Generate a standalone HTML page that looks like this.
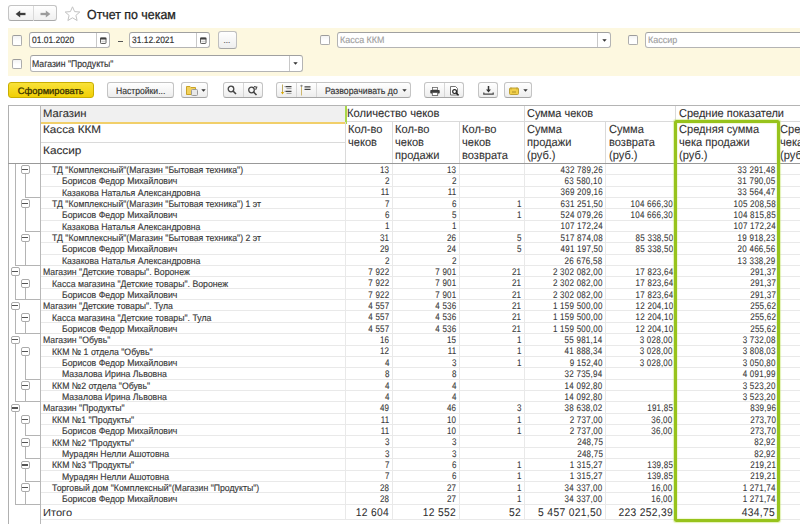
<!DOCTYPE html>
<html><head><meta charset="utf-8"><style>
html,body{margin:0;padding:0;width:800px;height:524px;overflow:hidden;background:#fff;}
body{position:relative;font-family:"Liberation Sans", sans-serif;}
.t{position:absolute;white-space:nowrap;text-rendering:geometricPrecision;-webkit-text-stroke:0.15px currentColor;}
.b{position:absolute;}
</style></head><body>
<div class="b" style="left:8.20px;top:5.20px;width:49.00px;height:16.30px;border:1px solid #c4c4c4;border-bottom-color:#a9a9a9;border-radius:3px;background:linear-gradient(#ffffff,#f0f0f0);box-sizing:border-box;"></div>
<div class="b" style="left:33.00px;top:6.00px;width:1.00px;height:15.00px;background:#dadada;"></div>
<svg class="b" style="left:15px;top:10px" width="11" height="8" viewBox="0 0 11 8"><path d="M4 4 H10.5" stroke="#3c3c3c" stroke-width="2.3"/><path d="M0.6 4 L5.2 0.4 V7.6 Z" fill="#3c3c3c"/></svg>
<svg class="b" style="left:39.5px;top:10px" width="11" height="8" viewBox="0 0 11 8"><path d="M0.5 4 H7" stroke="#9c9c9c" stroke-width="2.3"/><path d="M10.4 4 L5.8 0.4 V7.6 Z" fill="#9c9c9c"/></svg>
<svg class="b" style="left:64px;top:6px" width="17" height="16" viewBox="0 0 17 16"><path d="M8.5 0.8 L10.6 5.6 L15.8 6 L11.9 9.4 L13.1 14.5 L8.5 11.8 L3.9 14.5 L5.1 9.4 L1.2 6 L6.4 5.6 Z" fill="#fff" stroke="#c2c2c2" stroke-width="1"/></svg>
<div class="t" style="left:87.20px;top:7.87px;font-size:13.14px;line-height:13.14px;color:#222;transform:scaleX(0.9434);transform-origin:left top;-webkit-text-stroke:0.3px #222;">Отчет по чекам</div>
<div class="b" style="left:8.00px;top:28.00px;width:792.00px;height:47.50px;background:#fdf8e0;"></div>
<div class="b" style="left:12.00px;top:34.80px;width:10.00px;height:10.80px;border:1px solid #adadad;border-top-color:#9c9c9c;border-radius:2px;background:linear-gradient(#f3f3f3,#ffffff 60%);box-sizing:border-box;"></div>
<div class="b" style="left:29.30px;top:32.20px;width:81.20px;height:16.20px;border:1px solid #b4b4b4;border-top-color:#a0a0a0;border-radius:3px;background:#fff;box-sizing:border-box;"></div>
<div class="b" style="left:96.20px;top:33.20px;width:1.00px;height:14.20px;background:#c8c8c8;"></div>
<div class="t" style="left:32.30px;top:36.43px;font-size:9.29px;line-height:9.29px;color:#333;transform:scaleX(0.9091);transform-origin:left top;">01.01.2020</div>
<svg class="b" style="left:100.00px;top:37.00px" width="7" height="7" viewBox="0 0 7 7"><rect x="0.5" y="1" width="5.5" height="5.5" rx="0.8" fill="#f4f4f4" stroke="#505050" stroke-width="0.9"/><rect x="0.2" y="0.6" width="6.1" height="1.9" fill="#404040"/><path d="M1.5 4.5 H5" stroke="#bbb" stroke-width="0.6"/></svg>
<div class="b" style="left:118.00px;top:40.60px;width:4.50px;height:1.20px;background:#555;"></div>
<div class="b" style="left:129.00px;top:32.20px;width:81.20px;height:16.20px;border:1px solid #b4b4b4;border-top-color:#a0a0a0;border-radius:3px;background:#fff;box-sizing:border-box;"></div>
<div class="b" style="left:196.00px;top:33.20px;width:1.00px;height:14.20px;background:#c8c8c8;"></div>
<div class="t" style="left:132.00px;top:36.43px;font-size:9.29px;line-height:9.29px;color:#333;transform:scaleX(0.9091);transform-origin:left top;">31.12.2021</div>
<svg class="b" style="left:200.00px;top:37.00px" width="7" height="7" viewBox="0 0 7 7"><rect x="0.5" y="1" width="5.5" height="5.5" rx="0.8" fill="#f4f4f4" stroke="#505050" stroke-width="0.9"/><rect x="0.2" y="0.6" width="6.1" height="1.9" fill="#404040"/><path d="M1.5 4.5 H5" stroke="#bbb" stroke-width="0.6"/></svg>
<div class="b" style="left:217.60px;top:31.20px;width:19.60px;height:17.40px;border:1px solid #bfbfbf;border-bottom-color:#a5a5a5;border-radius:3px;background:linear-gradient(#fff,#eee);box-sizing:border-box;"></div>
<div class="t" style="left:223.50px;top:37.23px;font-size:8.00px;line-height:8.00px;color:#555;">...</div>
<div class="b" style="left:320.10px;top:34.60px;width:10.00px;height:10.80px;border:1px solid #adadad;border-top-color:#9c9c9c;border-radius:2px;background:linear-gradient(#f3f3f3,#ffffff 60%);box-sizing:border-box;"></div>
<div class="b" style="left:337.30px;top:32.20px;width:274.10px;height:16.20px;border:1px solid #b4b4b4;border-top-color:#a0a0a0;border-radius:3px;background:#fff;box-sizing:border-box;"></div>
<div class="b" style="left:597.00px;top:33.20px;width:1.00px;height:14.20px;background:#c8c8c8;"></div>
<div class="t" style="left:340.30px;top:36.37px;font-size:9.49px;line-height:9.49px;color:#a0a0a0;transform:scaleX(0.9434);transform-origin:left top;">Касса ККМ</div>
<svg class="b" style="left:601.50px;top:39.00px" width="5" height="3" viewBox="0 0 5 3"><path d="M0.3 0.3 H4.7 L2.5 2.8 Z" fill="#333"/></svg>
<div class="b" style="left:628.20px;top:34.70px;width:10.00px;height:10.80px;border:1px solid #adadad;border-top-color:#9c9c9c;border-radius:2px;background:linear-gradient(#f3f3f3,#ffffff 60%);box-sizing:border-box;"></div>
<div class="b" style="left:645.20px;top:32.20px;width:200.00px;height:16.20px;border:1px solid #b4b4b4;border-top-color:#a0a0a0;border-radius:3px;background:#fff;box-sizing:border-box;"></div>
<div class="t" style="left:648.30px;top:36.37px;font-size:9.49px;line-height:9.49px;color:#a0a0a0;transform:scaleX(0.9434);transform-origin:left top;">Кассир</div>
<div class="b" style="left:12.00px;top:58.60px;width:10.00px;height:10.80px;border:1px solid #adadad;border-top-color:#9c9c9c;border-radius:2px;background:linear-gradient(#f3f3f3,#ffffff 60%);box-sizing:border-box;"></div>
<div class="b" style="left:29.50px;top:55.30px;width:273.80px;height:16.80px;border:1px solid #b4b4b4;border-top-color:#a0a0a0;border-radius:3px;background:#fff;box-sizing:border-box;"></div>
<div class="b" style="left:289.10px;top:56.30px;width:1.00px;height:14.80px;background:#c8c8c8;"></div>
<div class="t" style="left:32.10px;top:59.75px;font-size:9.74px;line-height:9.74px;color:#333;transform:scaleX(0.8929);transform-origin:left top;">Магазин "Продукты"</div>
<svg class="b" style="left:293.30px;top:62.10px" width="5" height="3" viewBox="0 0 5 3"><path d="M0.3 0.3 H4.7 L2.5 2.8 Z" fill="#333"/></svg>
<div class="b" style="left:8.25px;top:81.80px;width:85.50px;height:16.60px;border:1px solid #c9ae00;border-radius:3px;background:linear-gradient(#f9e23a,#f1cf05);box-sizing:border-box;"></div>
<div class="t" style="left:17.80px;top:87.09px;font-size:9.35px;line-height:9.35px;color:#3a3300;-webkit-text-stroke:0.3px #3a3300;">Сформировать</div>
<div class="b" style="left:107.40px;top:81.80px;width:67.00px;height:16.60px;border:1px solid #c4c4c4;border-bottom-color:#a6a6a6;border-radius:3px;background:linear-gradient(#ffffff,#ededed);box-sizing:border-box;"></div>
<div class="t" style="left:116.30px;top:87.19px;font-size:9.46px;line-height:9.46px;color:#333;transform:scaleX(0.9091);transform-origin:left top;">Настройки...</div>
<div class="b" style="left:181.40px;top:81.80px;width:27.00px;height:16.60px;border:1px solid #c4c4c4;border-bottom-color:#a6a6a6;border-radius:3px;background:linear-gradient(#ffffff,#ededed);box-sizing:border-box;"></div>
<svg class="b" style="left:186px;top:84px" width="13" height="12" viewBox="0 0 13 12"><path d="M0.5 2.5 H4 L5 3.5 H9.5 V10.5 H0.5 Z" fill="#f2d15a" stroke="#c9a227" stroke-width="1"/><rect x="5.5" y="5.5" width="6" height="6" rx="1" fill="#e8e8e8" stroke="#9a9a9a"/></svg>
<svg class="b" style="left:200.50px;top:88.80px" width="5" height="3" viewBox="0 0 5 3"><path d="M0.3 0.3 H4.7 L2.5 2.8 Z" fill="#333"/></svg>
<div class="b" style="left:222.60px;top:81.80px;width:40.00px;height:16.60px;border:1px solid #c4c4c4;border-bottom-color:#a6a6a6;border-radius:3px;background:linear-gradient(#ffffff,#ededed);box-sizing:border-box;"></div>
<div class="b" style="left:242.50px;top:82.80px;width:1.00px;height:14.60px;background:#d6d6d6;"></div>
<svg class="b" style="left:227px;top:85px" width="10" height="10" viewBox="0 0 10 10"><circle cx="4" cy="4" r="2.8" fill="none" stroke="#444" stroke-width="1.3"/><path d="M6 6 L9 9" stroke="#444" stroke-width="1.6"/></svg>
<svg class="b" style="left:247px;top:84.5px" width="11" height="11" viewBox="0 0 11 11"><circle cx="4.5" cy="5" r="2.8" fill="none" stroke="#444" stroke-width="1.3"/><path d="M6.5 7 L9.5 10" stroke="#444" stroke-width="1.6"/><path d="M7 1.5 L9.8 2.2 L8.6 4.8" fill="none" stroke="#444" stroke-width="1.1"/></svg>
<div class="b" style="left:276.40px;top:81.80px;width:134.20px;height:16.60px;border:1px solid #c4c4c4;border-bottom-color:#a6a6a6;border-radius:3px;background:linear-gradient(#ffffff,#ededed);box-sizing:border-box;"></div>
<div class="b" style="left:296.20px;top:82.80px;width:1.00px;height:14.60px;background:#d6d6d6;"></div>
<div class="b" style="left:316.40px;top:82.80px;width:1.00px;height:14.60px;background:#d6d6d6;"></div>
<svg class="b" style="left:280px;top:84px" width="13" height="12" viewBox="0 0 13 12"><path d="M2.5 0.5 V9.5" stroke="#b8a050" stroke-width="0.9"/><path d="M0.9 8 L2.5 10.6 L4.1 8 Z" fill="#d8a800"/><path d="M5.5 2.6 H11.5 M5.5 7.3 H11.5" stroke="#444" stroke-width="1.2"/><path d="M6.5 4.6 H11.5 M6.5 9.4 H11.5" stroke="#999" stroke-width="0.9"/><path d="M4.6 2.6 H5.2 M4.6 7.3 H5.2" stroke="#777" stroke-width="1"/></svg>
<svg class="b" style="left:300px;top:84px" width="13" height="12" viewBox="0 0 13 12"><path d="M1.5 1.5 V11.5" stroke="#c8b060" stroke-width="0.9"/><circle cx="1.5" cy="1.8" r="1.1" fill="#888"/><path d="M4.5 2.8 H10.5 M4.5 5.4 H10.5" stroke="#444" stroke-width="1.2"/></svg>
<div class="t" style="left:324.60px;top:87.05px;font-size:9.62px;line-height:9.62px;color:#333;transform:scaleX(0.9091);transform-origin:left top;">Разворачивать до</div>
<svg class="b" style="left:402.10px;top:88.80px" width="5" height="3" viewBox="0 0 5 3"><path d="M0.3 0.3 H4.7 L2.5 2.8 Z" fill="#333"/></svg>
<div class="b" style="left:424.40px;top:81.80px;width:39.60px;height:16.60px;border:1px solid #c4c4c4;border-bottom-color:#a6a6a6;border-radius:3px;background:linear-gradient(#ffffff,#ededed);box-sizing:border-box;"></div>
<div class="b" style="left:444.20px;top:82.80px;width:1.00px;height:14.60px;background:#d6d6d6;"></div>
<svg class="b" style="left:429.5px;top:86.5px" width="10" height="9" viewBox="0 0 10 9"><rect x="2.5" y="0.5" width="5" height="2.5" fill="#fff" stroke="#666" stroke-width="0.8"/><rect x="0.3" y="3" width="9.4" height="3.6" rx="0.8" fill="#3c3c3c"/><rect x="2.3" y="5.5" width="5.4" height="3" fill="#fff" stroke="#555" stroke-width="0.8"/></svg>
<svg class="b" style="left:449.5px;top:86px" width="10" height="10" viewBox="0 0 10 10"><path d="M0.5 0.5 H5.5 L7.5 2.5 V9 H0.5 Z" fill="#fff" stroke="#666" stroke-width="0.9"/><circle cx="4.6" cy="5.6" r="1.9" fill="none" stroke="#222" stroke-width="1.2"/><path d="M6 7 L8.6 9.4" stroke="#222" stroke-width="1.5"/></svg>
<div class="b" style="left:478.40px;top:81.80px;width:19.60px;height:16.60px;border:1px solid #c4c4c4;border-bottom-color:#a6a6a6;border-radius:3px;background:linear-gradient(#ffffff,#ededed);box-sizing:border-box;"></div>
<svg class="b" style="left:482.5px;top:86px" width="11" height="9" viewBox="0 0 11 9"><path d="M5.5 0 V4.5" stroke="#333" stroke-width="1.5"/><path d="M3 3.6 L5.5 6.4 L8 3.6 Z" fill="#333"/><path d="M0.8 6.5 V8.2 H10.2 V6.5" fill="none" stroke="#444" stroke-width="1.2"/></svg>
<div class="b" style="left:504.40px;top:81.80px;width:27.20px;height:16.60px;border:1px solid #c4c4c4;border-bottom-color:#a6a6a6;border-radius:3px;background:linear-gradient(#ffffff,#ededed);box-sizing:border-box;"></div>
<svg class="b" style="left:509.2px;top:86.8px" width="10" height="8" viewBox="0 0 10 8"><rect x="0.5" y="1" width="9" height="6.5" rx="1" fill="#f1cf4a" stroke="#b89a2a" stroke-width="0.9"/><path d="M2 0.5 V2.5 M8 0.5 V2.5" stroke="#b89a2a" stroke-width="0.9"/><path d="M3 5 H7" stroke="#a08020" stroke-width="0.8"/></svg>
<svg class="b" style="left:523.30px;top:88.80px" width="5" height="3" viewBox="0 0 5 3"><path d="M0.3 0.3 H4.7 L2.5 2.8 Z" fill="#333"/></svg>
<div class="b" style="left:8.40px;top:105.20px;width:800.00px;height:1.00px;background:#b4b4b4;"></div>
<div class="b" style="left:8.40px;top:105.20px;width:1.00px;height:420.00px;background:#b0b0b0;"></div>
<div class="b" style="left:40.20px;top:105.20px;width:1.00px;height:420.00px;background:#b8b8b8;"></div>
<div class="b" style="left:41.20px;top:106.20px;width:304.10px;height:15.60px;background:#f0f0f0;"></div>
<div class="b" style="left:41.20px;top:121.80px;width:305.50px;height:2.00px;background:#f1cf6a;"></div>
<div class="b" style="left:345.30px;top:106.20px;width:1.60px;height:17.40px;background:#a8d84a;"></div>
<div class="b" style="left:346.90px;top:121.30px;width:460.00px;height:1.00px;background:#dadada;"></div>
<div class="b" style="left:41.20px;top:142.00px;width:304.10px;height:1.00px;background:#dadada;"></div>
<div class="b" style="left:8.40px;top:162.80px;width:800.00px;height:1.00px;background:#999999;"></div>
<div class="b" style="left:523.50px;top:106.20px;width:1.00px;height:15.10px;background:#dadada;"></div>
<div class="b" style="left:675.30px;top:106.20px;width:1.00px;height:15.10px;background:#dadada;"></div>
<div class="b" style="left:345.30px;top:122.30px;width:1.00px;height:40.50px;background:#dadada;"></div>
<div class="b" style="left:391.50px;top:122.30px;width:1.00px;height:40.50px;background:#dadada;"></div>
<div class="b" style="left:458.50px;top:122.30px;width:1.00px;height:40.50px;background:#dadada;"></div>
<div class="b" style="left:523.50px;top:122.30px;width:1.00px;height:40.50px;background:#dadada;"></div>
<div class="b" style="left:605.00px;top:122.30px;width:1.00px;height:40.50px;background:#dadada;"></div>
<div class="b" style="left:675.30px;top:122.30px;width:1.00px;height:40.50px;background:#dadada;"></div>
<div class="b" style="left:778.00px;top:122.30px;width:1.00px;height:40.50px;background:#dadada;"></div>
<div class="t" style="left:43.20px;top:109.32px;font-size:10.96px;line-height:10.96px;color:#2f2f2f;transform:scaleX(1.0309);transform-origin:left top;-webkit-text-stroke:0.1px #333;">Магазин</div>
<div class="t" style="left:43.20px;top:124.99px;font-size:10.76px;line-height:10.76px;color:#2f2f2f;transform:scaleX(1.0870);transform-origin:left top;-webkit-text-stroke:0.1px #333;">Касса ККМ</div>
<div class="t" style="left:43.20px;top:146.01px;font-size:10.86px;line-height:10.86px;color:#2f2f2f;transform:scaleX(1.0870);transform-origin:left top;-webkit-text-stroke:0.1px #333;">Кассир</div>
<div class="t" style="left:347.30px;top:108.45px;font-size:11.76px;line-height:11.76px;color:#2f2f2f;transform:scaleX(0.9524);transform-origin:left top;-webkit-text-stroke:0.1px #333;">Количество чеков</div>
<div class="t" style="left:527.00px;top:108.67px;font-size:11.50px;line-height:11.50px;color:#2f2f2f;transform:scaleX(0.9524);transform-origin:left top;-webkit-text-stroke:0.1px #333;">Сумма чеков</div>
<div class="t" style="left:678.50px;top:108.62px;font-size:11.55px;line-height:11.55px;color:#2f2f2f;transform:scaleX(0.9524);transform-origin:left top;-webkit-text-stroke:0.1px #333;">Средние показатели</div>
<div class="t" style="left:347.80px;top:124.33px;font-size:11.65px;line-height:11.65px;color:#333;transform:scaleX(0.9524);transform-origin:left top;-webkit-text-stroke:0.1px #333;">Кол-во</div>
<div class="t" style="left:347.80px;top:137.18px;font-size:11.65px;line-height:11.65px;color:#333;transform:scaleX(0.9524);transform-origin:left top;-webkit-text-stroke:0.1px #333;">чеков</div>
<div class="t" style="left:394.50px;top:124.33px;font-size:11.65px;line-height:11.65px;color:#333;transform:scaleX(0.9524);transform-origin:left top;-webkit-text-stroke:0.1px #333;">Кол-во</div>
<div class="t" style="left:394.50px;top:137.18px;font-size:11.65px;line-height:11.65px;color:#333;transform:scaleX(0.9524);transform-origin:left top;-webkit-text-stroke:0.1px #333;">чеков</div>
<div class="t" style="left:394.50px;top:150.03px;font-size:11.65px;line-height:11.65px;color:#333;transform:scaleX(0.9524);transform-origin:left top;-webkit-text-stroke:0.1px #333;">продажи</div>
<div class="t" style="left:461.60px;top:124.33px;font-size:11.65px;line-height:11.65px;color:#333;transform:scaleX(0.9524);transform-origin:left top;-webkit-text-stroke:0.1px #333;">Кол-во</div>
<div class="t" style="left:461.60px;top:137.18px;font-size:11.65px;line-height:11.65px;color:#333;transform:scaleX(0.9524);transform-origin:left top;-webkit-text-stroke:0.1px #333;">чеков</div>
<div class="t" style="left:461.60px;top:150.03px;font-size:11.65px;line-height:11.65px;color:#333;transform:scaleX(0.9524);transform-origin:left top;-webkit-text-stroke:0.1px #333;">возврата</div>
<div class="t" style="left:527.00px;top:124.33px;font-size:11.65px;line-height:11.65px;color:#333;transform:scaleX(0.9524);transform-origin:left top;-webkit-text-stroke:0.1px #333;">Сумма</div>
<div class="t" style="left:527.00px;top:137.18px;font-size:11.65px;line-height:11.65px;color:#333;transform:scaleX(0.9524);transform-origin:left top;-webkit-text-stroke:0.1px #333;">продажи</div>
<div class="t" style="left:527.00px;top:150.03px;font-size:11.65px;line-height:11.65px;color:#333;transform:scaleX(0.9524);transform-origin:left top;-webkit-text-stroke:0.1px #333;">(руб.)</div>
<div class="t" style="left:608.60px;top:124.33px;font-size:11.65px;line-height:11.65px;color:#333;transform:scaleX(0.9524);transform-origin:left top;-webkit-text-stroke:0.1px #333;">Сумма</div>
<div class="t" style="left:608.60px;top:137.18px;font-size:11.65px;line-height:11.65px;color:#333;transform:scaleX(0.9524);transform-origin:left top;-webkit-text-stroke:0.1px #333;">возврата</div>
<div class="t" style="left:608.60px;top:150.03px;font-size:11.65px;line-height:11.65px;color:#333;transform:scaleX(0.9524);transform-origin:left top;-webkit-text-stroke:0.1px #333;">(руб.)</div>
<div class="t" style="left:678.50px;top:124.33px;font-size:11.65px;line-height:11.65px;color:#333;transform:scaleX(0.9524);transform-origin:left top;-webkit-text-stroke:0.1px #333;">Средняя сумма</div>
<div class="t" style="left:678.50px;top:137.18px;font-size:11.65px;line-height:11.65px;color:#333;transform:scaleX(0.9524);transform-origin:left top;-webkit-text-stroke:0.1px #333;">чека продажи</div>
<div class="t" style="left:678.50px;top:150.03px;font-size:11.65px;line-height:11.65px;color:#333;transform:scaleX(0.9524);transform-origin:left top;-webkit-text-stroke:0.1px #333;">(руб.)</div>
<div class="t" style="left:779.80px;top:124.33px;font-size:11.65px;line-height:11.65px;color:#333;transform:scaleX(0.9524);transform-origin:left top;-webkit-text-stroke:0.1px #333;">Средняя</div>
<div class="t" style="left:779.80px;top:137.18px;font-size:11.65px;line-height:11.65px;color:#333;transform:scaleX(0.9524);transform-origin:left top;-webkit-text-stroke:0.1px #333;">чека</div>
<div class="t" style="left:779.80px;top:150.03px;font-size:11.65px;line-height:11.65px;color:#333;transform:scaleX(0.9524);transform-origin:left top;-webkit-text-stroke:0.1px #333;">(руб.)</div>
<div class="b" style="left:41.20px;top:174.16px;width:800.00px;height:1.00px;background:#e9e9e9;"></div>
<div class="t" style="left:52.20px;top:165.90px;font-size:9.33px;line-height:9.33px;color:#3a3a3a;transform:scaleX(0.9346);transform-origin:left top;">ТД "Комплексный"(Магазин "Бытовая техника")</div>
<div class="t" style="right:410.85px;top:165.67px;font-size:9.60px;line-height:9.60px;color:#3a3a3a;text-align:right;transform:scaleX(0.8333);transform-origin:right top;letter-spacing:0.3px;-webkit-text-stroke:0.1px #3a3a3a;">13</div>
<div class="t" style="right:343.85px;top:165.67px;font-size:9.60px;line-height:9.60px;color:#3a3a3a;text-align:right;transform:scaleX(0.8333);transform-origin:right top;letter-spacing:0.3px;-webkit-text-stroke:0.1px #3a3a3a;">13</div>
<div class="t" style="right:197.35px;top:165.67px;font-size:9.60px;line-height:9.60px;color:#3a3a3a;text-align:right;transform:scaleX(0.8333);transform-origin:right top;letter-spacing:0.3px;-webkit-text-stroke:0.1px #3a3a3a;">432 789,26</div>
<div class="t" style="right:24.35px;top:165.67px;font-size:9.60px;line-height:9.60px;color:#3a3a3a;text-align:right;transform:scaleX(0.8333);transform-origin:right top;letter-spacing:0.3px;-webkit-text-stroke:0.1px #3a3a3a;">33 291,48</div>
<div class="b" style="left:41.20px;top:185.52px;width:800.00px;height:1.00px;background:#e9e9e9;"></div>
<div class="t" style="left:61.60px;top:177.26px;font-size:9.33px;line-height:9.33px;color:#3a3a3a;transform:scaleX(0.9346);transform-origin:left top;">Борисов Федор Михайлович</div>
<div class="t" style="right:410.85px;top:177.03px;font-size:9.60px;line-height:9.60px;color:#3a3a3a;text-align:right;transform:scaleX(0.8333);transform-origin:right top;letter-spacing:0.3px;-webkit-text-stroke:0.1px #3a3a3a;">2</div>
<div class="t" style="right:343.85px;top:177.03px;font-size:9.60px;line-height:9.60px;color:#3a3a3a;text-align:right;transform:scaleX(0.8333);transform-origin:right top;letter-spacing:0.3px;-webkit-text-stroke:0.1px #3a3a3a;">2</div>
<div class="t" style="right:197.35px;top:177.03px;font-size:9.60px;line-height:9.60px;color:#3a3a3a;text-align:right;transform:scaleX(0.8333);transform-origin:right top;letter-spacing:0.3px;-webkit-text-stroke:0.1px #3a3a3a;">63 580,10</div>
<div class="t" style="right:24.35px;top:177.03px;font-size:9.60px;line-height:9.60px;color:#3a3a3a;text-align:right;transform:scaleX(0.8333);transform-origin:right top;letter-spacing:0.3px;-webkit-text-stroke:0.1px #3a3a3a;">31 790,05</div>
<div class="b" style="left:41.20px;top:196.88px;width:800.00px;height:1.00px;background:#e9e9e9;"></div>
<div class="t" style="left:61.60px;top:188.62px;font-size:9.33px;line-height:9.33px;color:#3a3a3a;transform:scaleX(0.9346);transform-origin:left top;">Казакова Наталья Александровна</div>
<div class="t" style="right:410.85px;top:188.39px;font-size:9.60px;line-height:9.60px;color:#3a3a3a;text-align:right;transform:scaleX(0.8333);transform-origin:right top;letter-spacing:0.3px;-webkit-text-stroke:0.1px #3a3a3a;">11</div>
<div class="t" style="right:343.85px;top:188.39px;font-size:9.60px;line-height:9.60px;color:#3a3a3a;text-align:right;transform:scaleX(0.8333);transform-origin:right top;letter-spacing:0.3px;-webkit-text-stroke:0.1px #3a3a3a;">11</div>
<div class="t" style="right:197.35px;top:188.39px;font-size:9.60px;line-height:9.60px;color:#3a3a3a;text-align:right;transform:scaleX(0.8333);transform-origin:right top;letter-spacing:0.3px;-webkit-text-stroke:0.1px #3a3a3a;">369 209,16</div>
<div class="t" style="right:24.35px;top:188.39px;font-size:9.60px;line-height:9.60px;color:#3a3a3a;text-align:right;transform:scaleX(0.8333);transform-origin:right top;letter-spacing:0.3px;-webkit-text-stroke:0.1px #3a3a3a;">33 564,47</div>
<div class="b" style="left:41.20px;top:208.24px;width:800.00px;height:1.00px;background:#e9e9e9;"></div>
<div class="t" style="left:52.20px;top:199.98px;font-size:9.33px;line-height:9.33px;color:#3a3a3a;transform:scaleX(0.9346);transform-origin:left top;">ТД "Комплексный"(Магазин "Бытовая техника") 1 эт</div>
<div class="t" style="right:410.85px;top:199.75px;font-size:9.60px;line-height:9.60px;color:#3a3a3a;text-align:right;transform:scaleX(0.8333);transform-origin:right top;letter-spacing:0.3px;-webkit-text-stroke:0.1px #3a3a3a;">7</div>
<div class="t" style="right:343.85px;top:199.75px;font-size:9.60px;line-height:9.60px;color:#3a3a3a;text-align:right;transform:scaleX(0.8333);transform-origin:right top;letter-spacing:0.3px;-webkit-text-stroke:0.1px #3a3a3a;">6</div>
<div class="t" style="right:278.85px;top:199.75px;font-size:9.60px;line-height:9.60px;color:#3a3a3a;text-align:right;transform:scaleX(0.8333);transform-origin:right top;letter-spacing:0.3px;-webkit-text-stroke:0.1px #3a3a3a;">1</div>
<div class="t" style="right:197.35px;top:199.75px;font-size:9.60px;line-height:9.60px;color:#3a3a3a;text-align:right;transform:scaleX(0.8333);transform-origin:right top;letter-spacing:0.3px;-webkit-text-stroke:0.1px #3a3a3a;">631 251,50</div>
<div class="t" style="right:127.05px;top:199.75px;font-size:9.60px;line-height:9.60px;color:#3a3a3a;text-align:right;transform:scaleX(0.8333);transform-origin:right top;letter-spacing:0.3px;-webkit-text-stroke:0.1px #3a3a3a;">104 666,30</div>
<div class="t" style="right:24.35px;top:199.75px;font-size:9.60px;line-height:9.60px;color:#3a3a3a;text-align:right;transform:scaleX(0.8333);transform-origin:right top;letter-spacing:0.3px;-webkit-text-stroke:0.1px #3a3a3a;">105 208,58</div>
<div class="b" style="left:41.20px;top:219.60px;width:800.00px;height:1.00px;background:#e9e9e9;"></div>
<div class="t" style="left:61.60px;top:211.34px;font-size:9.33px;line-height:9.33px;color:#3a3a3a;transform:scaleX(0.9346);transform-origin:left top;">Борисов Федор Михайлович</div>
<div class="t" style="right:410.85px;top:211.11px;font-size:9.60px;line-height:9.60px;color:#3a3a3a;text-align:right;transform:scaleX(0.8333);transform-origin:right top;letter-spacing:0.3px;-webkit-text-stroke:0.1px #3a3a3a;">6</div>
<div class="t" style="right:343.85px;top:211.11px;font-size:9.60px;line-height:9.60px;color:#3a3a3a;text-align:right;transform:scaleX(0.8333);transform-origin:right top;letter-spacing:0.3px;-webkit-text-stroke:0.1px #3a3a3a;">5</div>
<div class="t" style="right:278.85px;top:211.11px;font-size:9.60px;line-height:9.60px;color:#3a3a3a;text-align:right;transform:scaleX(0.8333);transform-origin:right top;letter-spacing:0.3px;-webkit-text-stroke:0.1px #3a3a3a;">1</div>
<div class="t" style="right:197.35px;top:211.11px;font-size:9.60px;line-height:9.60px;color:#3a3a3a;text-align:right;transform:scaleX(0.8333);transform-origin:right top;letter-spacing:0.3px;-webkit-text-stroke:0.1px #3a3a3a;">524 079,26</div>
<div class="t" style="right:127.05px;top:211.11px;font-size:9.60px;line-height:9.60px;color:#3a3a3a;text-align:right;transform:scaleX(0.8333);transform-origin:right top;letter-spacing:0.3px;-webkit-text-stroke:0.1px #3a3a3a;">104 666,30</div>
<div class="t" style="right:24.35px;top:211.11px;font-size:9.60px;line-height:9.60px;color:#3a3a3a;text-align:right;transform:scaleX(0.8333);transform-origin:right top;letter-spacing:0.3px;-webkit-text-stroke:0.1px #3a3a3a;">104 815,85</div>
<div class="b" style="left:41.20px;top:230.96px;width:800.00px;height:1.00px;background:#e9e9e9;"></div>
<div class="t" style="left:61.60px;top:222.70px;font-size:9.33px;line-height:9.33px;color:#3a3a3a;transform:scaleX(0.9346);transform-origin:left top;">Казакова Наталья Александровна</div>
<div class="t" style="right:410.85px;top:222.47px;font-size:9.60px;line-height:9.60px;color:#3a3a3a;text-align:right;transform:scaleX(0.8333);transform-origin:right top;letter-spacing:0.3px;-webkit-text-stroke:0.1px #3a3a3a;">1</div>
<div class="t" style="right:343.85px;top:222.47px;font-size:9.60px;line-height:9.60px;color:#3a3a3a;text-align:right;transform:scaleX(0.8333);transform-origin:right top;letter-spacing:0.3px;-webkit-text-stroke:0.1px #3a3a3a;">1</div>
<div class="t" style="right:197.35px;top:222.47px;font-size:9.60px;line-height:9.60px;color:#3a3a3a;text-align:right;transform:scaleX(0.8333);transform-origin:right top;letter-spacing:0.3px;-webkit-text-stroke:0.1px #3a3a3a;">107 172,24</div>
<div class="t" style="right:24.35px;top:222.47px;font-size:9.60px;line-height:9.60px;color:#3a3a3a;text-align:right;transform:scaleX(0.8333);transform-origin:right top;letter-spacing:0.3px;-webkit-text-stroke:0.1px #3a3a3a;">107 172,24</div>
<div class="b" style="left:41.20px;top:242.32px;width:800.00px;height:1.00px;background:#e9e9e9;"></div>
<div class="t" style="left:52.20px;top:234.06px;font-size:9.33px;line-height:9.33px;color:#3a3a3a;transform:scaleX(0.9346);transform-origin:left top;">ТД "Комплексный"(Магазин "Бытовая техника") 2 эт</div>
<div class="t" style="right:410.85px;top:233.83px;font-size:9.60px;line-height:9.60px;color:#3a3a3a;text-align:right;transform:scaleX(0.8333);transform-origin:right top;letter-spacing:0.3px;-webkit-text-stroke:0.1px #3a3a3a;">31</div>
<div class="t" style="right:343.85px;top:233.83px;font-size:9.60px;line-height:9.60px;color:#3a3a3a;text-align:right;transform:scaleX(0.8333);transform-origin:right top;letter-spacing:0.3px;-webkit-text-stroke:0.1px #3a3a3a;">26</div>
<div class="t" style="right:278.85px;top:233.83px;font-size:9.60px;line-height:9.60px;color:#3a3a3a;text-align:right;transform:scaleX(0.8333);transform-origin:right top;letter-spacing:0.3px;-webkit-text-stroke:0.1px #3a3a3a;">5</div>
<div class="t" style="right:197.35px;top:233.83px;font-size:9.60px;line-height:9.60px;color:#3a3a3a;text-align:right;transform:scaleX(0.8333);transform-origin:right top;letter-spacing:0.3px;-webkit-text-stroke:0.1px #3a3a3a;">517 874,08</div>
<div class="t" style="right:127.05px;top:233.83px;font-size:9.60px;line-height:9.60px;color:#3a3a3a;text-align:right;transform:scaleX(0.8333);transform-origin:right top;letter-spacing:0.3px;-webkit-text-stroke:0.1px #3a3a3a;">85 338,50</div>
<div class="t" style="right:24.35px;top:233.83px;font-size:9.60px;line-height:9.60px;color:#3a3a3a;text-align:right;transform:scaleX(0.8333);transform-origin:right top;letter-spacing:0.3px;-webkit-text-stroke:0.1px #3a3a3a;">19 918,23</div>
<div class="b" style="left:41.20px;top:253.68px;width:800.00px;height:1.00px;background:#e9e9e9;"></div>
<div class="t" style="left:61.60px;top:245.42px;font-size:9.33px;line-height:9.33px;color:#3a3a3a;transform:scaleX(0.9346);transform-origin:left top;">Борисов Федор Михайлович</div>
<div class="t" style="right:410.85px;top:245.19px;font-size:9.60px;line-height:9.60px;color:#3a3a3a;text-align:right;transform:scaleX(0.8333);transform-origin:right top;letter-spacing:0.3px;-webkit-text-stroke:0.1px #3a3a3a;">29</div>
<div class="t" style="right:343.85px;top:245.19px;font-size:9.60px;line-height:9.60px;color:#3a3a3a;text-align:right;transform:scaleX(0.8333);transform-origin:right top;letter-spacing:0.3px;-webkit-text-stroke:0.1px #3a3a3a;">24</div>
<div class="t" style="right:278.85px;top:245.19px;font-size:9.60px;line-height:9.60px;color:#3a3a3a;text-align:right;transform:scaleX(0.8333);transform-origin:right top;letter-spacing:0.3px;-webkit-text-stroke:0.1px #3a3a3a;">5</div>
<div class="t" style="right:197.35px;top:245.19px;font-size:9.60px;line-height:9.60px;color:#3a3a3a;text-align:right;transform:scaleX(0.8333);transform-origin:right top;letter-spacing:0.3px;-webkit-text-stroke:0.1px #3a3a3a;">491 197,50</div>
<div class="t" style="right:127.05px;top:245.19px;font-size:9.60px;line-height:9.60px;color:#3a3a3a;text-align:right;transform:scaleX(0.8333);transform-origin:right top;letter-spacing:0.3px;-webkit-text-stroke:0.1px #3a3a3a;">85 338,50</div>
<div class="t" style="right:24.35px;top:245.19px;font-size:9.60px;line-height:9.60px;color:#3a3a3a;text-align:right;transform:scaleX(0.8333);transform-origin:right top;letter-spacing:0.3px;-webkit-text-stroke:0.1px #3a3a3a;">20 466,56</div>
<div class="b" style="left:41.20px;top:265.04px;width:800.00px;height:1.00px;background:#e9e9e9;"></div>
<div class="t" style="left:61.60px;top:256.78px;font-size:9.33px;line-height:9.33px;color:#3a3a3a;transform:scaleX(0.9346);transform-origin:left top;">Казакова Наталья Александровна</div>
<div class="t" style="right:410.85px;top:256.55px;font-size:9.60px;line-height:9.60px;color:#3a3a3a;text-align:right;transform:scaleX(0.8333);transform-origin:right top;letter-spacing:0.3px;-webkit-text-stroke:0.1px #3a3a3a;">2</div>
<div class="t" style="right:343.85px;top:256.55px;font-size:9.60px;line-height:9.60px;color:#3a3a3a;text-align:right;transform:scaleX(0.8333);transform-origin:right top;letter-spacing:0.3px;-webkit-text-stroke:0.1px #3a3a3a;">2</div>
<div class="t" style="right:197.35px;top:256.55px;font-size:9.60px;line-height:9.60px;color:#3a3a3a;text-align:right;transform:scaleX(0.8333);transform-origin:right top;letter-spacing:0.3px;-webkit-text-stroke:0.1px #3a3a3a;">26 676,58</div>
<div class="t" style="right:24.35px;top:256.55px;font-size:9.60px;line-height:9.60px;color:#3a3a3a;text-align:right;transform:scaleX(0.8333);transform-origin:right top;letter-spacing:0.3px;-webkit-text-stroke:0.1px #3a3a3a;">13 338,29</div>
<div class="b" style="left:41.20px;top:276.40px;width:800.00px;height:1.00px;background:#e9e9e9;"></div>
<div class="t" style="left:43.00px;top:268.14px;font-size:9.33px;line-height:9.33px;color:#3a3a3a;transform:scaleX(0.9346);transform-origin:left top;">Магазин "Детские товары". Воронеж</div>
<div class="t" style="right:410.85px;top:267.91px;font-size:9.60px;line-height:9.60px;color:#3a3a3a;text-align:right;transform:scaleX(0.8333);transform-origin:right top;letter-spacing:0.3px;-webkit-text-stroke:0.1px #3a3a3a;">7 922</div>
<div class="t" style="right:343.85px;top:267.91px;font-size:9.60px;line-height:9.60px;color:#3a3a3a;text-align:right;transform:scaleX(0.8333);transform-origin:right top;letter-spacing:0.3px;-webkit-text-stroke:0.1px #3a3a3a;">7 901</div>
<div class="t" style="right:278.85px;top:267.91px;font-size:9.60px;line-height:9.60px;color:#3a3a3a;text-align:right;transform:scaleX(0.8333);transform-origin:right top;letter-spacing:0.3px;-webkit-text-stroke:0.1px #3a3a3a;">21</div>
<div class="t" style="right:197.35px;top:267.91px;font-size:9.60px;line-height:9.60px;color:#3a3a3a;text-align:right;transform:scaleX(0.8333);transform-origin:right top;letter-spacing:0.3px;-webkit-text-stroke:0.1px #3a3a3a;">2 302 082,00</div>
<div class="t" style="right:127.05px;top:267.91px;font-size:9.60px;line-height:9.60px;color:#3a3a3a;text-align:right;transform:scaleX(0.8333);transform-origin:right top;letter-spacing:0.3px;-webkit-text-stroke:0.1px #3a3a3a;">17 823,64</div>
<div class="t" style="right:24.35px;top:267.91px;font-size:9.60px;line-height:9.60px;color:#3a3a3a;text-align:right;transform:scaleX(0.8333);transform-origin:right top;letter-spacing:0.3px;-webkit-text-stroke:0.1px #3a3a3a;">291,37</div>
<div class="b" style="left:41.20px;top:287.76px;width:800.00px;height:1.00px;background:#e9e9e9;"></div>
<div class="t" style="left:52.20px;top:279.50px;font-size:9.33px;line-height:9.33px;color:#3a3a3a;transform:scaleX(0.9346);transform-origin:left top;">Касса магазина "Детские товары". Воронеж</div>
<div class="t" style="right:410.85px;top:279.27px;font-size:9.60px;line-height:9.60px;color:#3a3a3a;text-align:right;transform:scaleX(0.8333);transform-origin:right top;letter-spacing:0.3px;-webkit-text-stroke:0.1px #3a3a3a;">7 922</div>
<div class="t" style="right:343.85px;top:279.27px;font-size:9.60px;line-height:9.60px;color:#3a3a3a;text-align:right;transform:scaleX(0.8333);transform-origin:right top;letter-spacing:0.3px;-webkit-text-stroke:0.1px #3a3a3a;">7 901</div>
<div class="t" style="right:278.85px;top:279.27px;font-size:9.60px;line-height:9.60px;color:#3a3a3a;text-align:right;transform:scaleX(0.8333);transform-origin:right top;letter-spacing:0.3px;-webkit-text-stroke:0.1px #3a3a3a;">21</div>
<div class="t" style="right:197.35px;top:279.27px;font-size:9.60px;line-height:9.60px;color:#3a3a3a;text-align:right;transform:scaleX(0.8333);transform-origin:right top;letter-spacing:0.3px;-webkit-text-stroke:0.1px #3a3a3a;">2 302 082,00</div>
<div class="t" style="right:127.05px;top:279.27px;font-size:9.60px;line-height:9.60px;color:#3a3a3a;text-align:right;transform:scaleX(0.8333);transform-origin:right top;letter-spacing:0.3px;-webkit-text-stroke:0.1px #3a3a3a;">17 823,64</div>
<div class="t" style="right:24.35px;top:279.27px;font-size:9.60px;line-height:9.60px;color:#3a3a3a;text-align:right;transform:scaleX(0.8333);transform-origin:right top;letter-spacing:0.3px;-webkit-text-stroke:0.1px #3a3a3a;">291,37</div>
<div class="b" style="left:41.20px;top:299.12px;width:800.00px;height:1.00px;background:#e9e9e9;"></div>
<div class="t" style="left:61.60px;top:290.86px;font-size:9.33px;line-height:9.33px;color:#3a3a3a;transform:scaleX(0.9346);transform-origin:left top;">Борисов Федор Михайлович</div>
<div class="t" style="right:410.85px;top:290.63px;font-size:9.60px;line-height:9.60px;color:#3a3a3a;text-align:right;transform:scaleX(0.8333);transform-origin:right top;letter-spacing:0.3px;-webkit-text-stroke:0.1px #3a3a3a;">7 922</div>
<div class="t" style="right:343.85px;top:290.63px;font-size:9.60px;line-height:9.60px;color:#3a3a3a;text-align:right;transform:scaleX(0.8333);transform-origin:right top;letter-spacing:0.3px;-webkit-text-stroke:0.1px #3a3a3a;">7 901</div>
<div class="t" style="right:278.85px;top:290.63px;font-size:9.60px;line-height:9.60px;color:#3a3a3a;text-align:right;transform:scaleX(0.8333);transform-origin:right top;letter-spacing:0.3px;-webkit-text-stroke:0.1px #3a3a3a;">21</div>
<div class="t" style="right:197.35px;top:290.63px;font-size:9.60px;line-height:9.60px;color:#3a3a3a;text-align:right;transform:scaleX(0.8333);transform-origin:right top;letter-spacing:0.3px;-webkit-text-stroke:0.1px #3a3a3a;">2 302 082,00</div>
<div class="t" style="right:127.05px;top:290.63px;font-size:9.60px;line-height:9.60px;color:#3a3a3a;text-align:right;transform:scaleX(0.8333);transform-origin:right top;letter-spacing:0.3px;-webkit-text-stroke:0.1px #3a3a3a;">17 823,64</div>
<div class="t" style="right:24.35px;top:290.63px;font-size:9.60px;line-height:9.60px;color:#3a3a3a;text-align:right;transform:scaleX(0.8333);transform-origin:right top;letter-spacing:0.3px;-webkit-text-stroke:0.1px #3a3a3a;">291,37</div>
<div class="b" style="left:41.20px;top:310.48px;width:800.00px;height:1.00px;background:#e9e9e9;"></div>
<div class="t" style="left:43.00px;top:302.22px;font-size:9.33px;line-height:9.33px;color:#3a3a3a;transform:scaleX(0.9346);transform-origin:left top;">Магазин "Детские товары". Тула</div>
<div class="t" style="right:410.85px;top:301.99px;font-size:9.60px;line-height:9.60px;color:#3a3a3a;text-align:right;transform:scaleX(0.8333);transform-origin:right top;letter-spacing:0.3px;-webkit-text-stroke:0.1px #3a3a3a;">4 557</div>
<div class="t" style="right:343.85px;top:301.99px;font-size:9.60px;line-height:9.60px;color:#3a3a3a;text-align:right;transform:scaleX(0.8333);transform-origin:right top;letter-spacing:0.3px;-webkit-text-stroke:0.1px #3a3a3a;">4 536</div>
<div class="t" style="right:278.85px;top:301.99px;font-size:9.60px;line-height:9.60px;color:#3a3a3a;text-align:right;transform:scaleX(0.8333);transform-origin:right top;letter-spacing:0.3px;-webkit-text-stroke:0.1px #3a3a3a;">21</div>
<div class="t" style="right:197.35px;top:301.99px;font-size:9.60px;line-height:9.60px;color:#3a3a3a;text-align:right;transform:scaleX(0.8333);transform-origin:right top;letter-spacing:0.3px;-webkit-text-stroke:0.1px #3a3a3a;">1 159 500,00</div>
<div class="t" style="right:127.05px;top:301.99px;font-size:9.60px;line-height:9.60px;color:#3a3a3a;text-align:right;transform:scaleX(0.8333);transform-origin:right top;letter-spacing:0.3px;-webkit-text-stroke:0.1px #3a3a3a;">12 204,10</div>
<div class="t" style="right:24.35px;top:301.99px;font-size:9.60px;line-height:9.60px;color:#3a3a3a;text-align:right;transform:scaleX(0.8333);transform-origin:right top;letter-spacing:0.3px;-webkit-text-stroke:0.1px #3a3a3a;">255,62</div>
<div class="b" style="left:41.20px;top:321.84px;width:800.00px;height:1.00px;background:#e9e9e9;"></div>
<div class="t" style="left:52.20px;top:313.58px;font-size:9.33px;line-height:9.33px;color:#3a3a3a;transform:scaleX(0.9346);transform-origin:left top;">Касса магазина "Детские товары". Тула</div>
<div class="t" style="right:410.85px;top:313.35px;font-size:9.60px;line-height:9.60px;color:#3a3a3a;text-align:right;transform:scaleX(0.8333);transform-origin:right top;letter-spacing:0.3px;-webkit-text-stroke:0.1px #3a3a3a;">4 557</div>
<div class="t" style="right:343.85px;top:313.35px;font-size:9.60px;line-height:9.60px;color:#3a3a3a;text-align:right;transform:scaleX(0.8333);transform-origin:right top;letter-spacing:0.3px;-webkit-text-stroke:0.1px #3a3a3a;">4 536</div>
<div class="t" style="right:278.85px;top:313.35px;font-size:9.60px;line-height:9.60px;color:#3a3a3a;text-align:right;transform:scaleX(0.8333);transform-origin:right top;letter-spacing:0.3px;-webkit-text-stroke:0.1px #3a3a3a;">21</div>
<div class="t" style="right:197.35px;top:313.35px;font-size:9.60px;line-height:9.60px;color:#3a3a3a;text-align:right;transform:scaleX(0.8333);transform-origin:right top;letter-spacing:0.3px;-webkit-text-stroke:0.1px #3a3a3a;">1 159 500,00</div>
<div class="t" style="right:127.05px;top:313.35px;font-size:9.60px;line-height:9.60px;color:#3a3a3a;text-align:right;transform:scaleX(0.8333);transform-origin:right top;letter-spacing:0.3px;-webkit-text-stroke:0.1px #3a3a3a;">12 204,10</div>
<div class="t" style="right:24.35px;top:313.35px;font-size:9.60px;line-height:9.60px;color:#3a3a3a;text-align:right;transform:scaleX(0.8333);transform-origin:right top;letter-spacing:0.3px;-webkit-text-stroke:0.1px #3a3a3a;">255,62</div>
<div class="b" style="left:41.20px;top:333.20px;width:800.00px;height:1.00px;background:#e9e9e9;"></div>
<div class="t" style="left:61.60px;top:324.94px;font-size:9.33px;line-height:9.33px;color:#3a3a3a;transform:scaleX(0.9346);transform-origin:left top;">Борисов Федор Михайлович</div>
<div class="t" style="right:410.85px;top:324.71px;font-size:9.60px;line-height:9.60px;color:#3a3a3a;text-align:right;transform:scaleX(0.8333);transform-origin:right top;letter-spacing:0.3px;-webkit-text-stroke:0.1px #3a3a3a;">4 557</div>
<div class="t" style="right:343.85px;top:324.71px;font-size:9.60px;line-height:9.60px;color:#3a3a3a;text-align:right;transform:scaleX(0.8333);transform-origin:right top;letter-spacing:0.3px;-webkit-text-stroke:0.1px #3a3a3a;">4 536</div>
<div class="t" style="right:278.85px;top:324.71px;font-size:9.60px;line-height:9.60px;color:#3a3a3a;text-align:right;transform:scaleX(0.8333);transform-origin:right top;letter-spacing:0.3px;-webkit-text-stroke:0.1px #3a3a3a;">21</div>
<div class="t" style="right:197.35px;top:324.71px;font-size:9.60px;line-height:9.60px;color:#3a3a3a;text-align:right;transform:scaleX(0.8333);transform-origin:right top;letter-spacing:0.3px;-webkit-text-stroke:0.1px #3a3a3a;">1 159 500,00</div>
<div class="t" style="right:127.05px;top:324.71px;font-size:9.60px;line-height:9.60px;color:#3a3a3a;text-align:right;transform:scaleX(0.8333);transform-origin:right top;letter-spacing:0.3px;-webkit-text-stroke:0.1px #3a3a3a;">12 204,10</div>
<div class="t" style="right:24.35px;top:324.71px;font-size:9.60px;line-height:9.60px;color:#3a3a3a;text-align:right;transform:scaleX(0.8333);transform-origin:right top;letter-spacing:0.3px;-webkit-text-stroke:0.1px #3a3a3a;">255,62</div>
<div class="b" style="left:41.20px;top:344.56px;width:800.00px;height:1.00px;background:#e9e9e9;"></div>
<div class="t" style="left:43.00px;top:336.30px;font-size:9.33px;line-height:9.33px;color:#3a3a3a;transform:scaleX(0.9346);transform-origin:left top;">Магазин "Обувь"</div>
<div class="t" style="right:410.85px;top:336.07px;font-size:9.60px;line-height:9.60px;color:#3a3a3a;text-align:right;transform:scaleX(0.8333);transform-origin:right top;letter-spacing:0.3px;-webkit-text-stroke:0.1px #3a3a3a;">16</div>
<div class="t" style="right:343.85px;top:336.07px;font-size:9.60px;line-height:9.60px;color:#3a3a3a;text-align:right;transform:scaleX(0.8333);transform-origin:right top;letter-spacing:0.3px;-webkit-text-stroke:0.1px #3a3a3a;">15</div>
<div class="t" style="right:278.85px;top:336.07px;font-size:9.60px;line-height:9.60px;color:#3a3a3a;text-align:right;transform:scaleX(0.8333);transform-origin:right top;letter-spacing:0.3px;-webkit-text-stroke:0.1px #3a3a3a;">1</div>
<div class="t" style="right:197.35px;top:336.07px;font-size:9.60px;line-height:9.60px;color:#3a3a3a;text-align:right;transform:scaleX(0.8333);transform-origin:right top;letter-spacing:0.3px;-webkit-text-stroke:0.1px #3a3a3a;">55 981,14</div>
<div class="t" style="right:127.05px;top:336.07px;font-size:9.60px;line-height:9.60px;color:#3a3a3a;text-align:right;transform:scaleX(0.8333);transform-origin:right top;letter-spacing:0.3px;-webkit-text-stroke:0.1px #3a3a3a;">3 028,00</div>
<div class="t" style="right:24.35px;top:336.07px;font-size:9.60px;line-height:9.60px;color:#3a3a3a;text-align:right;transform:scaleX(0.8333);transform-origin:right top;letter-spacing:0.3px;-webkit-text-stroke:0.1px #3a3a3a;">3 732,08</div>
<div class="b" style="left:41.20px;top:355.92px;width:800.00px;height:1.00px;background:#e9e9e9;"></div>
<div class="t" style="left:52.20px;top:347.66px;font-size:9.33px;line-height:9.33px;color:#3a3a3a;transform:scaleX(0.9346);transform-origin:left top;">ККМ № 1 отдела "Обувь"</div>
<div class="t" style="right:410.85px;top:347.43px;font-size:9.60px;line-height:9.60px;color:#3a3a3a;text-align:right;transform:scaleX(0.8333);transform-origin:right top;letter-spacing:0.3px;-webkit-text-stroke:0.1px #3a3a3a;">12</div>
<div class="t" style="right:343.85px;top:347.43px;font-size:9.60px;line-height:9.60px;color:#3a3a3a;text-align:right;transform:scaleX(0.8333);transform-origin:right top;letter-spacing:0.3px;-webkit-text-stroke:0.1px #3a3a3a;">11</div>
<div class="t" style="right:278.85px;top:347.43px;font-size:9.60px;line-height:9.60px;color:#3a3a3a;text-align:right;transform:scaleX(0.8333);transform-origin:right top;letter-spacing:0.3px;-webkit-text-stroke:0.1px #3a3a3a;">1</div>
<div class="t" style="right:197.35px;top:347.43px;font-size:9.60px;line-height:9.60px;color:#3a3a3a;text-align:right;transform:scaleX(0.8333);transform-origin:right top;letter-spacing:0.3px;-webkit-text-stroke:0.1px #3a3a3a;">41 888,34</div>
<div class="t" style="right:127.05px;top:347.43px;font-size:9.60px;line-height:9.60px;color:#3a3a3a;text-align:right;transform:scaleX(0.8333);transform-origin:right top;letter-spacing:0.3px;-webkit-text-stroke:0.1px #3a3a3a;">3 028,00</div>
<div class="t" style="right:24.35px;top:347.43px;font-size:9.60px;line-height:9.60px;color:#3a3a3a;text-align:right;transform:scaleX(0.8333);transform-origin:right top;letter-spacing:0.3px;-webkit-text-stroke:0.1px #3a3a3a;">3 808,03</div>
<div class="b" style="left:41.20px;top:367.28px;width:800.00px;height:1.00px;background:#e9e9e9;"></div>
<div class="t" style="left:61.60px;top:359.02px;font-size:9.33px;line-height:9.33px;color:#3a3a3a;transform:scaleX(0.9346);transform-origin:left top;">Борисов Федор Михайлович</div>
<div class="t" style="right:410.85px;top:358.79px;font-size:9.60px;line-height:9.60px;color:#3a3a3a;text-align:right;transform:scaleX(0.8333);transform-origin:right top;letter-spacing:0.3px;-webkit-text-stroke:0.1px #3a3a3a;">4</div>
<div class="t" style="right:343.85px;top:358.79px;font-size:9.60px;line-height:9.60px;color:#3a3a3a;text-align:right;transform:scaleX(0.8333);transform-origin:right top;letter-spacing:0.3px;-webkit-text-stroke:0.1px #3a3a3a;">3</div>
<div class="t" style="right:278.85px;top:358.79px;font-size:9.60px;line-height:9.60px;color:#3a3a3a;text-align:right;transform:scaleX(0.8333);transform-origin:right top;letter-spacing:0.3px;-webkit-text-stroke:0.1px #3a3a3a;">1</div>
<div class="t" style="right:197.35px;top:358.79px;font-size:9.60px;line-height:9.60px;color:#3a3a3a;text-align:right;transform:scaleX(0.8333);transform-origin:right top;letter-spacing:0.3px;-webkit-text-stroke:0.1px #3a3a3a;">9 152,40</div>
<div class="t" style="right:127.05px;top:358.79px;font-size:9.60px;line-height:9.60px;color:#3a3a3a;text-align:right;transform:scaleX(0.8333);transform-origin:right top;letter-spacing:0.3px;-webkit-text-stroke:0.1px #3a3a3a;">3 028,00</div>
<div class="t" style="right:24.35px;top:358.79px;font-size:9.60px;line-height:9.60px;color:#3a3a3a;text-align:right;transform:scaleX(0.8333);transform-origin:right top;letter-spacing:0.3px;-webkit-text-stroke:0.1px #3a3a3a;">3 050,80</div>
<div class="b" style="left:41.20px;top:378.64px;width:800.00px;height:1.00px;background:#e9e9e9;"></div>
<div class="t" style="left:61.60px;top:370.38px;font-size:9.33px;line-height:9.33px;color:#3a3a3a;transform:scaleX(0.9346);transform-origin:left top;">Мазалова Ирина Львовна</div>
<div class="t" style="right:410.85px;top:370.15px;font-size:9.60px;line-height:9.60px;color:#3a3a3a;text-align:right;transform:scaleX(0.8333);transform-origin:right top;letter-spacing:0.3px;-webkit-text-stroke:0.1px #3a3a3a;">8</div>
<div class="t" style="right:343.85px;top:370.15px;font-size:9.60px;line-height:9.60px;color:#3a3a3a;text-align:right;transform:scaleX(0.8333);transform-origin:right top;letter-spacing:0.3px;-webkit-text-stroke:0.1px #3a3a3a;">8</div>
<div class="t" style="right:197.35px;top:370.15px;font-size:9.60px;line-height:9.60px;color:#3a3a3a;text-align:right;transform:scaleX(0.8333);transform-origin:right top;letter-spacing:0.3px;-webkit-text-stroke:0.1px #3a3a3a;">32 735,94</div>
<div class="t" style="right:24.35px;top:370.15px;font-size:9.60px;line-height:9.60px;color:#3a3a3a;text-align:right;transform:scaleX(0.8333);transform-origin:right top;letter-spacing:0.3px;-webkit-text-stroke:0.1px #3a3a3a;">4 091,99</div>
<div class="b" style="left:41.20px;top:390.00px;width:800.00px;height:1.00px;background:#e9e9e9;"></div>
<div class="t" style="left:52.20px;top:381.74px;font-size:9.33px;line-height:9.33px;color:#3a3a3a;transform:scaleX(0.9346);transform-origin:left top;">ККМ №2 отдела "Обувь"</div>
<div class="t" style="right:410.85px;top:381.51px;font-size:9.60px;line-height:9.60px;color:#3a3a3a;text-align:right;transform:scaleX(0.8333);transform-origin:right top;letter-spacing:0.3px;-webkit-text-stroke:0.1px #3a3a3a;">4</div>
<div class="t" style="right:343.85px;top:381.51px;font-size:9.60px;line-height:9.60px;color:#3a3a3a;text-align:right;transform:scaleX(0.8333);transform-origin:right top;letter-spacing:0.3px;-webkit-text-stroke:0.1px #3a3a3a;">4</div>
<div class="t" style="right:197.35px;top:381.51px;font-size:9.60px;line-height:9.60px;color:#3a3a3a;text-align:right;transform:scaleX(0.8333);transform-origin:right top;letter-spacing:0.3px;-webkit-text-stroke:0.1px #3a3a3a;">14 092,80</div>
<div class="t" style="right:24.35px;top:381.51px;font-size:9.60px;line-height:9.60px;color:#3a3a3a;text-align:right;transform:scaleX(0.8333);transform-origin:right top;letter-spacing:0.3px;-webkit-text-stroke:0.1px #3a3a3a;">3 523,20</div>
<div class="b" style="left:41.20px;top:401.36px;width:800.00px;height:1.00px;background:#e9e9e9;"></div>
<div class="t" style="left:61.60px;top:393.10px;font-size:9.33px;line-height:9.33px;color:#3a3a3a;transform:scaleX(0.9346);transform-origin:left top;">Мазалова Ирина Львовна</div>
<div class="t" style="right:410.85px;top:392.87px;font-size:9.60px;line-height:9.60px;color:#3a3a3a;text-align:right;transform:scaleX(0.8333);transform-origin:right top;letter-spacing:0.3px;-webkit-text-stroke:0.1px #3a3a3a;">4</div>
<div class="t" style="right:343.85px;top:392.87px;font-size:9.60px;line-height:9.60px;color:#3a3a3a;text-align:right;transform:scaleX(0.8333);transform-origin:right top;letter-spacing:0.3px;-webkit-text-stroke:0.1px #3a3a3a;">4</div>
<div class="t" style="right:197.35px;top:392.87px;font-size:9.60px;line-height:9.60px;color:#3a3a3a;text-align:right;transform:scaleX(0.8333);transform-origin:right top;letter-spacing:0.3px;-webkit-text-stroke:0.1px #3a3a3a;">14 092,80</div>
<div class="t" style="right:24.35px;top:392.87px;font-size:9.60px;line-height:9.60px;color:#3a3a3a;text-align:right;transform:scaleX(0.8333);transform-origin:right top;letter-spacing:0.3px;-webkit-text-stroke:0.1px #3a3a3a;">3 523,20</div>
<div class="b" style="left:41.20px;top:412.72px;width:800.00px;height:1.00px;background:#e9e9e9;"></div>
<div class="t" style="left:43.00px;top:404.46px;font-size:9.33px;line-height:9.33px;color:#3a3a3a;transform:scaleX(0.9346);transform-origin:left top;">Магазин "Продукты"</div>
<div class="t" style="right:410.85px;top:404.23px;font-size:9.60px;line-height:9.60px;color:#3a3a3a;text-align:right;transform:scaleX(0.8333);transform-origin:right top;letter-spacing:0.3px;-webkit-text-stroke:0.1px #3a3a3a;">49</div>
<div class="t" style="right:343.85px;top:404.23px;font-size:9.60px;line-height:9.60px;color:#3a3a3a;text-align:right;transform:scaleX(0.8333);transform-origin:right top;letter-spacing:0.3px;-webkit-text-stroke:0.1px #3a3a3a;">46</div>
<div class="t" style="right:278.85px;top:404.23px;font-size:9.60px;line-height:9.60px;color:#3a3a3a;text-align:right;transform:scaleX(0.8333);transform-origin:right top;letter-spacing:0.3px;-webkit-text-stroke:0.1px #3a3a3a;">3</div>
<div class="t" style="right:197.35px;top:404.23px;font-size:9.60px;line-height:9.60px;color:#3a3a3a;text-align:right;transform:scaleX(0.8333);transform-origin:right top;letter-spacing:0.3px;-webkit-text-stroke:0.1px #3a3a3a;">38 638,02</div>
<div class="t" style="right:127.05px;top:404.23px;font-size:9.60px;line-height:9.60px;color:#3a3a3a;text-align:right;transform:scaleX(0.8333);transform-origin:right top;letter-spacing:0.3px;-webkit-text-stroke:0.1px #3a3a3a;">191,85</div>
<div class="t" style="right:24.35px;top:404.23px;font-size:9.60px;line-height:9.60px;color:#3a3a3a;text-align:right;transform:scaleX(0.8333);transform-origin:right top;letter-spacing:0.3px;-webkit-text-stroke:0.1px #3a3a3a;">839,96</div>
<div class="b" style="left:41.20px;top:424.08px;width:800.00px;height:1.00px;background:#e9e9e9;"></div>
<div class="t" style="left:52.20px;top:415.82px;font-size:9.33px;line-height:9.33px;color:#3a3a3a;transform:scaleX(0.9346);transform-origin:left top;">ККМ №1 "Продукты"</div>
<div class="t" style="right:410.85px;top:415.59px;font-size:9.60px;line-height:9.60px;color:#3a3a3a;text-align:right;transform:scaleX(0.8333);transform-origin:right top;letter-spacing:0.3px;-webkit-text-stroke:0.1px #3a3a3a;">11</div>
<div class="t" style="right:343.85px;top:415.59px;font-size:9.60px;line-height:9.60px;color:#3a3a3a;text-align:right;transform:scaleX(0.8333);transform-origin:right top;letter-spacing:0.3px;-webkit-text-stroke:0.1px #3a3a3a;">10</div>
<div class="t" style="right:278.85px;top:415.59px;font-size:9.60px;line-height:9.60px;color:#3a3a3a;text-align:right;transform:scaleX(0.8333);transform-origin:right top;letter-spacing:0.3px;-webkit-text-stroke:0.1px #3a3a3a;">1</div>
<div class="t" style="right:197.35px;top:415.59px;font-size:9.60px;line-height:9.60px;color:#3a3a3a;text-align:right;transform:scaleX(0.8333);transform-origin:right top;letter-spacing:0.3px;-webkit-text-stroke:0.1px #3a3a3a;">2 737,00</div>
<div class="t" style="right:127.05px;top:415.59px;font-size:9.60px;line-height:9.60px;color:#3a3a3a;text-align:right;transform:scaleX(0.8333);transform-origin:right top;letter-spacing:0.3px;-webkit-text-stroke:0.1px #3a3a3a;">36,00</div>
<div class="t" style="right:24.35px;top:415.59px;font-size:9.60px;line-height:9.60px;color:#3a3a3a;text-align:right;transform:scaleX(0.8333);transform-origin:right top;letter-spacing:0.3px;-webkit-text-stroke:0.1px #3a3a3a;">273,70</div>
<div class="b" style="left:41.20px;top:435.44px;width:800.00px;height:1.00px;background:#e9e9e9;"></div>
<div class="t" style="left:61.60px;top:427.18px;font-size:9.33px;line-height:9.33px;color:#3a3a3a;transform:scaleX(0.9346);transform-origin:left top;">Борисов Федор Михайлович</div>
<div class="t" style="right:410.85px;top:426.95px;font-size:9.60px;line-height:9.60px;color:#3a3a3a;text-align:right;transform:scaleX(0.8333);transform-origin:right top;letter-spacing:0.3px;-webkit-text-stroke:0.1px #3a3a3a;">11</div>
<div class="t" style="right:343.85px;top:426.95px;font-size:9.60px;line-height:9.60px;color:#3a3a3a;text-align:right;transform:scaleX(0.8333);transform-origin:right top;letter-spacing:0.3px;-webkit-text-stroke:0.1px #3a3a3a;">10</div>
<div class="t" style="right:278.85px;top:426.95px;font-size:9.60px;line-height:9.60px;color:#3a3a3a;text-align:right;transform:scaleX(0.8333);transform-origin:right top;letter-spacing:0.3px;-webkit-text-stroke:0.1px #3a3a3a;">1</div>
<div class="t" style="right:197.35px;top:426.95px;font-size:9.60px;line-height:9.60px;color:#3a3a3a;text-align:right;transform:scaleX(0.8333);transform-origin:right top;letter-spacing:0.3px;-webkit-text-stroke:0.1px #3a3a3a;">2 737,00</div>
<div class="t" style="right:127.05px;top:426.95px;font-size:9.60px;line-height:9.60px;color:#3a3a3a;text-align:right;transform:scaleX(0.8333);transform-origin:right top;letter-spacing:0.3px;-webkit-text-stroke:0.1px #3a3a3a;">36,00</div>
<div class="t" style="right:24.35px;top:426.95px;font-size:9.60px;line-height:9.60px;color:#3a3a3a;text-align:right;transform:scaleX(0.8333);transform-origin:right top;letter-spacing:0.3px;-webkit-text-stroke:0.1px #3a3a3a;">273,70</div>
<div class="b" style="left:41.20px;top:446.80px;width:800.00px;height:1.00px;background:#e9e9e9;"></div>
<div class="t" style="left:52.20px;top:438.54px;font-size:9.33px;line-height:9.33px;color:#3a3a3a;transform:scaleX(0.9346);transform-origin:left top;">ККМ №2 "Продукты"</div>
<div class="t" style="right:410.85px;top:438.31px;font-size:9.60px;line-height:9.60px;color:#3a3a3a;text-align:right;transform:scaleX(0.8333);transform-origin:right top;letter-spacing:0.3px;-webkit-text-stroke:0.1px #3a3a3a;">3</div>
<div class="t" style="right:343.85px;top:438.31px;font-size:9.60px;line-height:9.60px;color:#3a3a3a;text-align:right;transform:scaleX(0.8333);transform-origin:right top;letter-spacing:0.3px;-webkit-text-stroke:0.1px #3a3a3a;">3</div>
<div class="t" style="right:197.35px;top:438.31px;font-size:9.60px;line-height:9.60px;color:#3a3a3a;text-align:right;transform:scaleX(0.8333);transform-origin:right top;letter-spacing:0.3px;-webkit-text-stroke:0.1px #3a3a3a;">248,75</div>
<div class="t" style="right:24.35px;top:438.31px;font-size:9.60px;line-height:9.60px;color:#3a3a3a;text-align:right;transform:scaleX(0.8333);transform-origin:right top;letter-spacing:0.3px;-webkit-text-stroke:0.1px #3a3a3a;">82,92</div>
<div class="b" style="left:41.20px;top:458.16px;width:800.00px;height:1.00px;background:#e9e9e9;"></div>
<div class="t" style="left:61.60px;top:449.90px;font-size:9.33px;line-height:9.33px;color:#3a3a3a;transform:scaleX(0.9346);transform-origin:left top;">Мурадян Нелли Ашотовна</div>
<div class="t" style="right:410.85px;top:449.67px;font-size:9.60px;line-height:9.60px;color:#3a3a3a;text-align:right;transform:scaleX(0.8333);transform-origin:right top;letter-spacing:0.3px;-webkit-text-stroke:0.1px #3a3a3a;">3</div>
<div class="t" style="right:343.85px;top:449.67px;font-size:9.60px;line-height:9.60px;color:#3a3a3a;text-align:right;transform:scaleX(0.8333);transform-origin:right top;letter-spacing:0.3px;-webkit-text-stroke:0.1px #3a3a3a;">3</div>
<div class="t" style="right:197.35px;top:449.67px;font-size:9.60px;line-height:9.60px;color:#3a3a3a;text-align:right;transform:scaleX(0.8333);transform-origin:right top;letter-spacing:0.3px;-webkit-text-stroke:0.1px #3a3a3a;">248,75</div>
<div class="t" style="right:24.35px;top:449.67px;font-size:9.60px;line-height:9.60px;color:#3a3a3a;text-align:right;transform:scaleX(0.8333);transform-origin:right top;letter-spacing:0.3px;-webkit-text-stroke:0.1px #3a3a3a;">82,92</div>
<div class="b" style="left:41.20px;top:469.52px;width:800.00px;height:1.00px;background:#e9e9e9;"></div>
<div class="t" style="left:52.20px;top:461.26px;font-size:9.33px;line-height:9.33px;color:#3a3a3a;transform:scaleX(0.9346);transform-origin:left top;">ККМ №3 "Продукты"</div>
<div class="t" style="right:410.85px;top:461.03px;font-size:9.60px;line-height:9.60px;color:#3a3a3a;text-align:right;transform:scaleX(0.8333);transform-origin:right top;letter-spacing:0.3px;-webkit-text-stroke:0.1px #3a3a3a;">7</div>
<div class="t" style="right:343.85px;top:461.03px;font-size:9.60px;line-height:9.60px;color:#3a3a3a;text-align:right;transform:scaleX(0.8333);transform-origin:right top;letter-spacing:0.3px;-webkit-text-stroke:0.1px #3a3a3a;">6</div>
<div class="t" style="right:278.85px;top:461.03px;font-size:9.60px;line-height:9.60px;color:#3a3a3a;text-align:right;transform:scaleX(0.8333);transform-origin:right top;letter-spacing:0.3px;-webkit-text-stroke:0.1px #3a3a3a;">1</div>
<div class="t" style="right:197.35px;top:461.03px;font-size:9.60px;line-height:9.60px;color:#3a3a3a;text-align:right;transform:scaleX(0.8333);transform-origin:right top;letter-spacing:0.3px;-webkit-text-stroke:0.1px #3a3a3a;">1 315,27</div>
<div class="t" style="right:127.05px;top:461.03px;font-size:9.60px;line-height:9.60px;color:#3a3a3a;text-align:right;transform:scaleX(0.8333);transform-origin:right top;letter-spacing:0.3px;-webkit-text-stroke:0.1px #3a3a3a;">139,85</div>
<div class="t" style="right:24.35px;top:461.03px;font-size:9.60px;line-height:9.60px;color:#3a3a3a;text-align:right;transform:scaleX(0.8333);transform-origin:right top;letter-spacing:0.3px;-webkit-text-stroke:0.1px #3a3a3a;">219,21</div>
<div class="b" style="left:41.20px;top:480.88px;width:800.00px;height:1.00px;background:#e9e9e9;"></div>
<div class="t" style="left:61.60px;top:472.62px;font-size:9.33px;line-height:9.33px;color:#3a3a3a;transform:scaleX(0.9346);transform-origin:left top;">Мурадян Нелли Ашотовна</div>
<div class="t" style="right:410.85px;top:472.39px;font-size:9.60px;line-height:9.60px;color:#3a3a3a;text-align:right;transform:scaleX(0.8333);transform-origin:right top;letter-spacing:0.3px;-webkit-text-stroke:0.1px #3a3a3a;">7</div>
<div class="t" style="right:343.85px;top:472.39px;font-size:9.60px;line-height:9.60px;color:#3a3a3a;text-align:right;transform:scaleX(0.8333);transform-origin:right top;letter-spacing:0.3px;-webkit-text-stroke:0.1px #3a3a3a;">6</div>
<div class="t" style="right:278.85px;top:472.39px;font-size:9.60px;line-height:9.60px;color:#3a3a3a;text-align:right;transform:scaleX(0.8333);transform-origin:right top;letter-spacing:0.3px;-webkit-text-stroke:0.1px #3a3a3a;">1</div>
<div class="t" style="right:197.35px;top:472.39px;font-size:9.60px;line-height:9.60px;color:#3a3a3a;text-align:right;transform:scaleX(0.8333);transform-origin:right top;letter-spacing:0.3px;-webkit-text-stroke:0.1px #3a3a3a;">1 315,27</div>
<div class="t" style="right:127.05px;top:472.39px;font-size:9.60px;line-height:9.60px;color:#3a3a3a;text-align:right;transform:scaleX(0.8333);transform-origin:right top;letter-spacing:0.3px;-webkit-text-stroke:0.1px #3a3a3a;">139,85</div>
<div class="t" style="right:24.35px;top:472.39px;font-size:9.60px;line-height:9.60px;color:#3a3a3a;text-align:right;transform:scaleX(0.8333);transform-origin:right top;letter-spacing:0.3px;-webkit-text-stroke:0.1px #3a3a3a;">219,21</div>
<div class="b" style="left:41.20px;top:492.24px;width:800.00px;height:1.00px;background:#e9e9e9;"></div>
<div class="t" style="left:52.20px;top:483.98px;font-size:9.33px;line-height:9.33px;color:#3a3a3a;transform:scaleX(0.9346);transform-origin:left top;">Торговый дом "Комплексный"(Магазин "Продукты")</div>
<div class="t" style="right:410.85px;top:483.75px;font-size:9.60px;line-height:9.60px;color:#3a3a3a;text-align:right;transform:scaleX(0.8333);transform-origin:right top;letter-spacing:0.3px;-webkit-text-stroke:0.1px #3a3a3a;">28</div>
<div class="t" style="right:343.85px;top:483.75px;font-size:9.60px;line-height:9.60px;color:#3a3a3a;text-align:right;transform:scaleX(0.8333);transform-origin:right top;letter-spacing:0.3px;-webkit-text-stroke:0.1px #3a3a3a;">27</div>
<div class="t" style="right:278.85px;top:483.75px;font-size:9.60px;line-height:9.60px;color:#3a3a3a;text-align:right;transform:scaleX(0.8333);transform-origin:right top;letter-spacing:0.3px;-webkit-text-stroke:0.1px #3a3a3a;">1</div>
<div class="t" style="right:197.35px;top:483.75px;font-size:9.60px;line-height:9.60px;color:#3a3a3a;text-align:right;transform:scaleX(0.8333);transform-origin:right top;letter-spacing:0.3px;-webkit-text-stroke:0.1px #3a3a3a;">34 337,00</div>
<div class="t" style="right:127.05px;top:483.75px;font-size:9.60px;line-height:9.60px;color:#3a3a3a;text-align:right;transform:scaleX(0.8333);transform-origin:right top;letter-spacing:0.3px;-webkit-text-stroke:0.1px #3a3a3a;">16,00</div>
<div class="t" style="right:24.35px;top:483.75px;font-size:9.60px;line-height:9.60px;color:#3a3a3a;text-align:right;transform:scaleX(0.8333);transform-origin:right top;letter-spacing:0.3px;-webkit-text-stroke:0.1px #3a3a3a;">1 271,74</div>
<div class="b" style="left:41.20px;top:503.60px;width:800.00px;height:1.00px;background:#e9e9e9;"></div>
<div class="t" style="left:61.60px;top:495.34px;font-size:9.33px;line-height:9.33px;color:#3a3a3a;transform:scaleX(0.9346);transform-origin:left top;">Борисов Федор Михайлович</div>
<div class="t" style="right:410.85px;top:495.11px;font-size:9.60px;line-height:9.60px;color:#3a3a3a;text-align:right;transform:scaleX(0.8333);transform-origin:right top;letter-spacing:0.3px;-webkit-text-stroke:0.1px #3a3a3a;">28</div>
<div class="t" style="right:343.85px;top:495.11px;font-size:9.60px;line-height:9.60px;color:#3a3a3a;text-align:right;transform:scaleX(0.8333);transform-origin:right top;letter-spacing:0.3px;-webkit-text-stroke:0.1px #3a3a3a;">27</div>
<div class="t" style="right:278.85px;top:495.11px;font-size:9.60px;line-height:9.60px;color:#3a3a3a;text-align:right;transform:scaleX(0.8333);transform-origin:right top;letter-spacing:0.3px;-webkit-text-stroke:0.1px #3a3a3a;">1</div>
<div class="t" style="right:197.35px;top:495.11px;font-size:9.60px;line-height:9.60px;color:#3a3a3a;text-align:right;transform:scaleX(0.8333);transform-origin:right top;letter-spacing:0.3px;-webkit-text-stroke:0.1px #3a3a3a;">34 337,00</div>
<div class="t" style="right:127.05px;top:495.11px;font-size:9.60px;line-height:9.60px;color:#3a3a3a;text-align:right;transform:scaleX(0.8333);transform-origin:right top;letter-spacing:0.3px;-webkit-text-stroke:0.1px #3a3a3a;">16,00</div>
<div class="t" style="right:24.35px;top:495.11px;font-size:9.60px;line-height:9.60px;color:#3a3a3a;text-align:right;transform:scaleX(0.8333);transform-origin:right top;letter-spacing:0.3px;-webkit-text-stroke:0.1px #3a3a3a;">1 271,74</div>
<div class="b" style="left:345.30px;top:163.80px;width:1.00px;height:356.00px;background:#e9e9e9;"></div>
<div class="b" style="left:391.50px;top:163.80px;width:1.00px;height:356.00px;background:#e9e9e9;"></div>
<div class="b" style="left:458.50px;top:163.80px;width:1.00px;height:356.00px;background:#e9e9e9;"></div>
<div class="b" style="left:523.50px;top:163.80px;width:1.00px;height:356.00px;background:#e9e9e9;"></div>
<div class="b" style="left:605.00px;top:163.80px;width:1.00px;height:356.00px;background:#e9e9e9;"></div>
<div class="b" style="left:675.30px;top:163.80px;width:1.00px;height:356.00px;background:#e9e9e9;"></div>
<div class="b" style="left:778.00px;top:163.80px;width:1.00px;height:356.00px;background:#e9e9e9;"></div>
<div class="b" style="left:41.20px;top:519.10px;width:800.00px;height:1.00px;background:#e9e9e9;"></div>
<div class="t" style="left:42.90px;top:508.56px;font-size:10.32px;line-height:10.32px;color:#2f2f2f;transform:scaleX(1.0753);transform-origin:left top;-webkit-text-stroke:0.05px #333;">Итого</div>
<div class="t" style="right:411.00px;top:507.68px;font-size:11.12px;line-height:11.12px;color:#2f2f2f;text-align:right;transform:scaleX(0.9259);transform-origin:right top;letter-spacing:0.35px;-webkit-text-stroke:0.05px #333;">12 604</div>
<div class="t" style="right:344.00px;top:507.68px;font-size:11.12px;line-height:11.12px;color:#2f2f2f;text-align:right;transform:scaleX(0.9259);transform-origin:right top;letter-spacing:0.35px;-webkit-text-stroke:0.05px #333;">12 552</div>
<div class="t" style="right:279.00px;top:507.68px;font-size:11.12px;line-height:11.12px;color:#2f2f2f;text-align:right;transform:scaleX(0.9259);transform-origin:right top;letter-spacing:0.35px;-webkit-text-stroke:0.05px #333;">52</div>
<div class="t" style="right:197.50px;top:507.68px;font-size:11.12px;line-height:11.12px;color:#2f2f2f;text-align:right;transform:scaleX(0.9259);transform-origin:right top;letter-spacing:0.35px;-webkit-text-stroke:0.05px #333;">5 457 021,50</div>
<div class="t" style="right:127.20px;top:507.68px;font-size:11.12px;line-height:11.12px;color:#2f2f2f;text-align:right;transform:scaleX(0.9259);transform-origin:right top;letter-spacing:0.35px;-webkit-text-stroke:0.05px #333;">223 252,39</div>
<div class="t" style="right:24.50px;top:507.68px;font-size:11.12px;line-height:11.12px;color:#2f2f2f;text-align:right;transform:scaleX(0.9259);transform-origin:right top;letter-spacing:0.35px;-webkit-text-stroke:0.05px #333;">434,75</div>
<div class="b" style="left:14.80px;top:163.80px;width:1.00px;height:101.24px;background:#b4b4b4;"></div>
<div class="b" style="left:14.80px;top:265.04px;width:25.70px;height:1.00px;background:#b4b4b4;"></div>
<div class="b" style="left:14.80px;top:275.74px;width:1.00px;height:23.38px;background:#b4b4b4;"></div>
<div class="b" style="left:14.80px;top:299.12px;width:25.70px;height:1.00px;background:#b4b4b4;"></div>
<div class="b" style="left:10.60px;top:267.44px;width:9px;height:8.6px;border:1px solid #ababab;border-radius:2px;background:#fff;box-sizing:border-box;"><div class="b" style="left:0.9px;top:2.5px;width:5.2px;height:1.3px;background:#555;"></div></div>
<div class="b" style="left:14.80px;top:309.82px;width:1.00px;height:23.38px;background:#b4b4b4;"></div>
<div class="b" style="left:14.80px;top:333.20px;width:25.70px;height:1.00px;background:#b4b4b4;"></div>
<div class="b" style="left:10.60px;top:301.52px;width:9px;height:8.6px;border:1px solid #ababab;border-radius:2px;background:#fff;box-sizing:border-box;"><div class="b" style="left:0.9px;top:2.5px;width:5.2px;height:1.3px;background:#555;"></div></div>
<div class="b" style="left:14.80px;top:343.90px;width:1.00px;height:57.46px;background:#b4b4b4;"></div>
<div class="b" style="left:14.80px;top:401.36px;width:25.70px;height:1.00px;background:#b4b4b4;"></div>
<div class="b" style="left:10.60px;top:335.60px;width:9px;height:8.6px;border:1px solid #ababab;border-radius:2px;background:#fff;box-sizing:border-box;"><div class="b" style="left:0.9px;top:2.5px;width:5.2px;height:1.3px;background:#555;"></div></div>
<div class="b" style="left:14.80px;top:412.06px;width:1.00px;height:91.54px;background:#b4b4b4;"></div>
<div class="b" style="left:14.80px;top:503.60px;width:25.70px;height:1.00px;background:#b4b4b4;"></div>
<div class="b" style="left:10.60px;top:403.76px;width:9px;height:8.6px;border:1px solid #ababab;border-radius:2px;background:#fff;box-sizing:border-box;"><div class="b" style="left:0.9px;top:2.5px;width:5.2px;height:1.3px;background:#555;"></div></div>
<div class="b" style="left:24.60px;top:173.50px;width:1.00px;height:23.38px;background:#b4b4b4;"></div>
<div class="b" style="left:24.60px;top:196.88px;width:15.90px;height:1.00px;background:#b4b4b4;"></div>
<div class="b" style="left:20.60px;top:165.40px;width:9px;height:8.6px;border:1px solid #ababab;border-radius:2px;background:#fff;box-sizing:border-box;"><div class="b" style="left:0.9px;top:2.5px;width:5.2px;height:1.3px;background:#555;"></div></div>
<div class="b" style="left:24.60px;top:207.58px;width:1.00px;height:23.38px;background:#b4b4b4;"></div>
<div class="b" style="left:24.60px;top:230.96px;width:15.90px;height:1.00px;background:#b4b4b4;"></div>
<div class="b" style="left:20.60px;top:199.48px;width:9px;height:8.6px;border:1px solid #ababab;border-radius:2px;background:#fff;box-sizing:border-box;"><div class="b" style="left:0.9px;top:2.5px;width:5.2px;height:1.3px;background:#555;"></div></div>
<div class="b" style="left:24.60px;top:241.66px;width:1.00px;height:23.38px;background:#b4b4b4;"></div>
<div class="b" style="left:24.60px;top:265.04px;width:15.90px;height:1.00px;background:#b4b4b4;"></div>
<div class="b" style="left:20.60px;top:233.56px;width:9px;height:8.6px;border:1px solid #ababab;border-radius:2px;background:#fff;box-sizing:border-box;"><div class="b" style="left:0.9px;top:2.5px;width:5.2px;height:1.3px;background:#555;"></div></div>
<div class="b" style="left:24.60px;top:287.10px;width:1.00px;height:12.02px;background:#b4b4b4;"></div>
<div class="b" style="left:24.60px;top:299.12px;width:15.90px;height:1.00px;background:#b4b4b4;"></div>
<div class="b" style="left:20.60px;top:279.00px;width:9px;height:8.6px;border:1px solid #ababab;border-radius:2px;background:#fff;box-sizing:border-box;"><div class="b" style="left:0.9px;top:2.5px;width:5.2px;height:1.3px;background:#555;"></div></div>
<div class="b" style="left:24.60px;top:321.18px;width:1.00px;height:12.02px;background:#b4b4b4;"></div>
<div class="b" style="left:24.60px;top:333.20px;width:15.90px;height:1.00px;background:#b4b4b4;"></div>
<div class="b" style="left:20.60px;top:313.08px;width:9px;height:8.6px;border:1px solid #ababab;border-radius:2px;background:#fff;box-sizing:border-box;"><div class="b" style="left:0.9px;top:2.5px;width:5.2px;height:1.3px;background:#555;"></div></div>
<div class="b" style="left:24.60px;top:355.26px;width:1.00px;height:23.38px;background:#b4b4b4;"></div>
<div class="b" style="left:24.60px;top:378.64px;width:15.90px;height:1.00px;background:#b4b4b4;"></div>
<div class="b" style="left:20.60px;top:347.16px;width:9px;height:8.6px;border:1px solid #ababab;border-radius:2px;background:#fff;box-sizing:border-box;"><div class="b" style="left:0.9px;top:2.5px;width:5.2px;height:1.3px;background:#555;"></div></div>
<div class="b" style="left:24.60px;top:389.34px;width:1.00px;height:12.02px;background:#b4b4b4;"></div>
<div class="b" style="left:24.60px;top:401.36px;width:15.90px;height:1.00px;background:#b4b4b4;"></div>
<div class="b" style="left:20.60px;top:381.24px;width:9px;height:8.6px;border:1px solid #ababab;border-radius:2px;background:#fff;box-sizing:border-box;"><div class="b" style="left:0.9px;top:2.5px;width:5.2px;height:1.3px;background:#555;"></div></div>
<div class="b" style="left:24.60px;top:423.42px;width:1.00px;height:12.02px;background:#b4b4b4;"></div>
<div class="b" style="left:24.60px;top:435.44px;width:15.90px;height:1.00px;background:#b4b4b4;"></div>
<div class="b" style="left:20.60px;top:415.32px;width:9px;height:8.6px;border:1px solid #ababab;border-radius:2px;background:#fff;box-sizing:border-box;"><div class="b" style="left:0.9px;top:2.5px;width:5.2px;height:1.3px;background:#555;"></div></div>
<div class="b" style="left:24.60px;top:446.14px;width:1.00px;height:12.02px;background:#b4b4b4;"></div>
<div class="b" style="left:24.60px;top:458.16px;width:15.90px;height:1.00px;background:#b4b4b4;"></div>
<div class="b" style="left:20.60px;top:438.04px;width:9px;height:8.6px;border:1px solid #ababab;border-radius:2px;background:#fff;box-sizing:border-box;"><div class="b" style="left:0.9px;top:2.5px;width:5.2px;height:1.3px;background:#555;"></div></div>
<div class="b" style="left:24.60px;top:468.86px;width:1.00px;height:12.02px;background:#b4b4b4;"></div>
<div class="b" style="left:24.60px;top:480.88px;width:15.90px;height:1.00px;background:#b4b4b4;"></div>
<div class="b" style="left:20.60px;top:460.76px;width:9px;height:8.6px;border:1px solid #ababab;border-radius:2px;background:#fff;box-sizing:border-box;"><div class="b" style="left:0.9px;top:2.5px;width:5.2px;height:1.3px;background:#555;"></div></div>
<div class="b" style="left:24.60px;top:491.58px;width:1.00px;height:12.02px;background:#b4b4b4;"></div>
<div class="b" style="left:24.60px;top:503.60px;width:15.90px;height:1.00px;background:#b4b4b4;"></div>
<div class="b" style="left:20.60px;top:483.48px;width:9px;height:8.6px;border:1px solid #ababab;border-radius:2px;background:#fff;box-sizing:border-box;"><div class="b" style="left:0.9px;top:2.5px;width:5.2px;height:1.3px;background:#555;"></div></div>
<div class="b" style="left:674.00px;top:120.00px;width:106.00px;height:402.30px;border:3px solid #97c31c;border-radius:2.5px;box-sizing:border-box;box-shadow:0 0 1px 0.5px rgba(190,225,90,0.45), inset 0 0 1px 0.5px rgba(190,225,90,0.45);"></div>
</body></html>
